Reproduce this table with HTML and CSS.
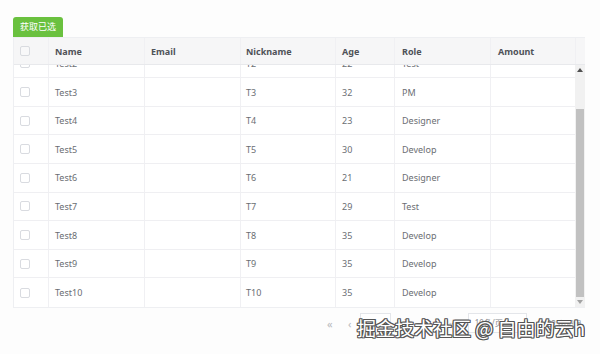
FILE: index.html
```html
<!DOCTYPE html>
<html lang="zh">
<head>
<meta charset="utf-8">
<link rel="stylesheet" href="styles.css">
</head>
<body>
<div class="page">
  <button class="btn">获取已选</button>
  <div class="table">
    <div class="thead">
      <div class="row head">
        <div class="cell c-check"><span class="box"></span></div>
        <div class="cell c-name">Name</div>
        <div class="cell c-email">Email</div>
        <div class="cell c-nick">Nickname</div>
        <div class="cell c-age">Age</div>
        <div class="cell c-role">Role</div>
        <div class="cell c-amount">Amount</div>
        <div class="gutter"></div>
      </div>
    </div>
    <div class="tbody-wrap">
      <div class="viewport">
        <div class="rows">
          <div class="row"><div class="cell c-check"><span class="box"></span></div><div class="cell c-name">Test1</div><div class="cell c-email"></div><div class="cell c-nick">T1</div><div class="cell c-age">26</div><div class="cell c-role">Develop</div><div class="cell c-amount"></div></div>
          <div class="row"><div class="cell c-check"><span class="box"></span></div><div class="cell c-name">Test2</div><div class="cell c-email"></div><div class="cell c-nick">T2</div><div class="cell c-age">22</div><div class="cell c-role">Test</div><div class="cell c-amount"></div></div>
          <div class="row"><div class="cell c-check"><span class="box"></span></div><div class="cell c-name">Test3</div><div class="cell c-email"></div><div class="cell c-nick">T3</div><div class="cell c-age">32</div><div class="cell c-role">PM</div><div class="cell c-amount"></div></div>
          <div class="row"><div class="cell c-check"><span class="box"></span></div><div class="cell c-name">Test4</div><div class="cell c-email"></div><div class="cell c-nick">T4</div><div class="cell c-age">23</div><div class="cell c-role">Designer</div><div class="cell c-amount"></div></div>
          <div class="row"><div class="cell c-check"><span class="box"></span></div><div class="cell c-name">Test5</div><div class="cell c-email"></div><div class="cell c-nick">T5</div><div class="cell c-age">30</div><div class="cell c-role">Develop</div><div class="cell c-amount"></div></div>
          <div class="row"><div class="cell c-check"><span class="box"></span></div><div class="cell c-name">Test6</div><div class="cell c-email"></div><div class="cell c-nick">T6</div><div class="cell c-age">21</div><div class="cell c-role">Designer</div><div class="cell c-amount"></div></div>
          <div class="row"><div class="cell c-check"><span class="box"></span></div><div class="cell c-name">Test7</div><div class="cell c-email"></div><div class="cell c-nick">T7</div><div class="cell c-age">29</div><div class="cell c-role">Test</div><div class="cell c-amount"></div></div>
          <div class="row"><div class="cell c-check"><span class="box"></span></div><div class="cell c-name">Test8</div><div class="cell c-email"></div><div class="cell c-nick">T8</div><div class="cell c-age">35</div><div class="cell c-role">Develop</div><div class="cell c-amount"></div></div>
          <div class="row"><div class="cell c-check"><span class="box"></span></div><div class="cell c-name">Test9</div><div class="cell c-email"></div><div class="cell c-nick">T9</div><div class="cell c-age">35</div><div class="cell c-role">Develop</div><div class="cell c-amount"></div></div>
          <div class="row"><div class="cell c-check"><span class="box"></span></div><div class="cell c-name">Test10</div><div class="cell c-email"></div><div class="cell c-nick">T10</div><div class="cell c-age">35</div><div class="cell c-role">Develop</div><div class="cell c-amount"></div></div>
        </div>
      </div>
      <div class="scrollbar">
        <div class="sb-btn"><svg width="6" height="4" viewBox="0 0 6 4"><path d="M0 4 L3 0 L6 4 Z" fill="#505050"/></svg></div>
        <div class="sb-track"><div class="sb-thumb"></div></div>
        <div class="sb-btn"><svg width="6" height="4" viewBox="0 0 6 4"><path d="M0 0 L6 0 L3 4 Z" fill="#a3a3a3"/></svg></div>
      </div>
    </div>
  </div>
  <div class="pager">
    <span class="pg-icon">«</span>
    <span class="pg-icon">‹</span>
    <span class="pg-num active">1</span>
    <span class="pg-num">3</span>
    <span class="pg-icon">›</span>
    <span class="pg-icon">»</span>
    <span class="pg-select">10条/页 <span class="caret">▾</span></span>
    <span class="pg-total">共 22 条记录</span>
  </div>
  <div class="watermark">掘金技术社区 @ 自由的云h</div>
</div>
</body>
</html>
```
FILE: styles.css
```css
* { box-sizing: border-box; }
html, body { margin: 0; padding: 0; background: #fdfdfd; }
body {
  font-family: "Noto Sans", "Noto Sans CJK SC", sans-serif;
  font-size: 9px;
  color: #6b6e73;
  width: 600px;
  height: 354px;
  overflow: hidden;
}
.page {
  position: relative;
  padding: 17px 15px 0 13px;
  height: 354px;
}
.btn {
  display: block;
  width: 50px;
  height: 20px;
  border: none;
  border-radius: 3px 3px 0 0;
  background: #6ac13f;
  color: #fff;
  font-family: "Noto Sans CJK SC", sans-serif;
  font-size: 9px;
  padding: 0;
  line-height: 20px;
}
.table {
  width: 572px;
  border: 1px solid #eeeff2;
  border-right: none;
  background: #fff;
}
.row {
  display: flex;
  height: 28.6px;
  border-bottom: 1px solid #efeff2;
}
.row.head {
  height: 27px;
  background: #f6f6f7;
  color: #4f5258;
  font-weight: 700;
  border-bottom: 1px solid #e8e9ec;
}
.cell {
  display: flex;
  align-items: center;
  padding-left: 6px;
  border-right: 1px solid #f0f0f3;
  flex-shrink: 0;
}
.c-check { width: 35px; padding-left: 6px; }
.c-name { width: 96px; }
.c-email { width: 96px; }
.c-nick { width: 95px; padding-left: 5px; }
.c-age { width: 59px; }
.c-role { width: 96px; padding-left: 7px; }
.c-amount { width: 85px; padding-left: 7px; }
.gutter { width: 9px; flex-shrink: 0; }
.box {
  display: block;
  width: 10px;
  height: 10px;
  border: 1px solid #d9dbe0;
  border-radius: 2px;
  background: #fff;
}
.head .box { background: #f8f8f9; }
.tbody-wrap {
  display: flex;
  height: 242px;
}
.viewport {
  width: 562px;
  height: 242px;
  overflow: hidden;
  display: flex;
  flex-direction: column-reverse;
}
.rows { flex-shrink: 0; }
.rows .row:last-child { border-bottom: none; }
.scrollbar {
  width: 10px;
  display: flex;
  flex-direction: column;
  background: #f1f1f1;
}
.sb-btn {
  height: 10px;
  display: flex;
  align-items: center;
  justify-content: center;
  flex-shrink: 0;
}
.sb-track {
  flex: 1;
  display: flex;
  flex-direction: column;
  justify-content: flex-end;
  padding: 0 1px;
}
.sb-thumb {
  height: 188px;
  background: #c1c1c1;
}
.pager {
  display: flex;
  align-items: center;
  justify-content: flex-end;
  height: 20px;
  margin-top: 5px;
  padding-right: 3px;
  font-size: 8px;
  color: #8b8d92;
  font-family: "Noto Sans", "Noto Sans CJK SC", sans-serif;
}
.pg-icon {
  width: 20px;
  text-align: center;
  font-size: 11px;
  color: #b8babe;
}
.pg-num {
  width: 31px;
  height: 20px;
  line-height: 18px;
  text-align: center;
  border: 1px solid transparent;
}
.pg-num.active {
  border-color: #e4e6ea;
  background: #fff;
  color: #6b6e73;
}
.pg-select {
  margin-left: 6px;
  width: 59px;
  height: 20px;
  line-height: 18px;
  border: 1px solid #e4e6ea;
  background: #fff;
  padding-left: 6px;
}
.caret { color: #b8babe; margin-left: 4px; }
.pg-total { margin-left: 10px; }
.watermark {
  position: absolute;
  left: 357px;
  top: 313px;
  font-family: "Noto Sans CJK SC", sans-serif;
  font-size: 19px;
  line-height: 30px;
  color: #fff;
  white-space: nowrap;
  text-shadow:
    1px 0 0 #555, -1px 0 0 #555, 0 1px 0 #555, 0 -1px 0 #555,
    1px 1px 0 #555, -1px -1px 0 #555, 1px -1px 0 #555, -1px 1px 0 #555;
}
```
